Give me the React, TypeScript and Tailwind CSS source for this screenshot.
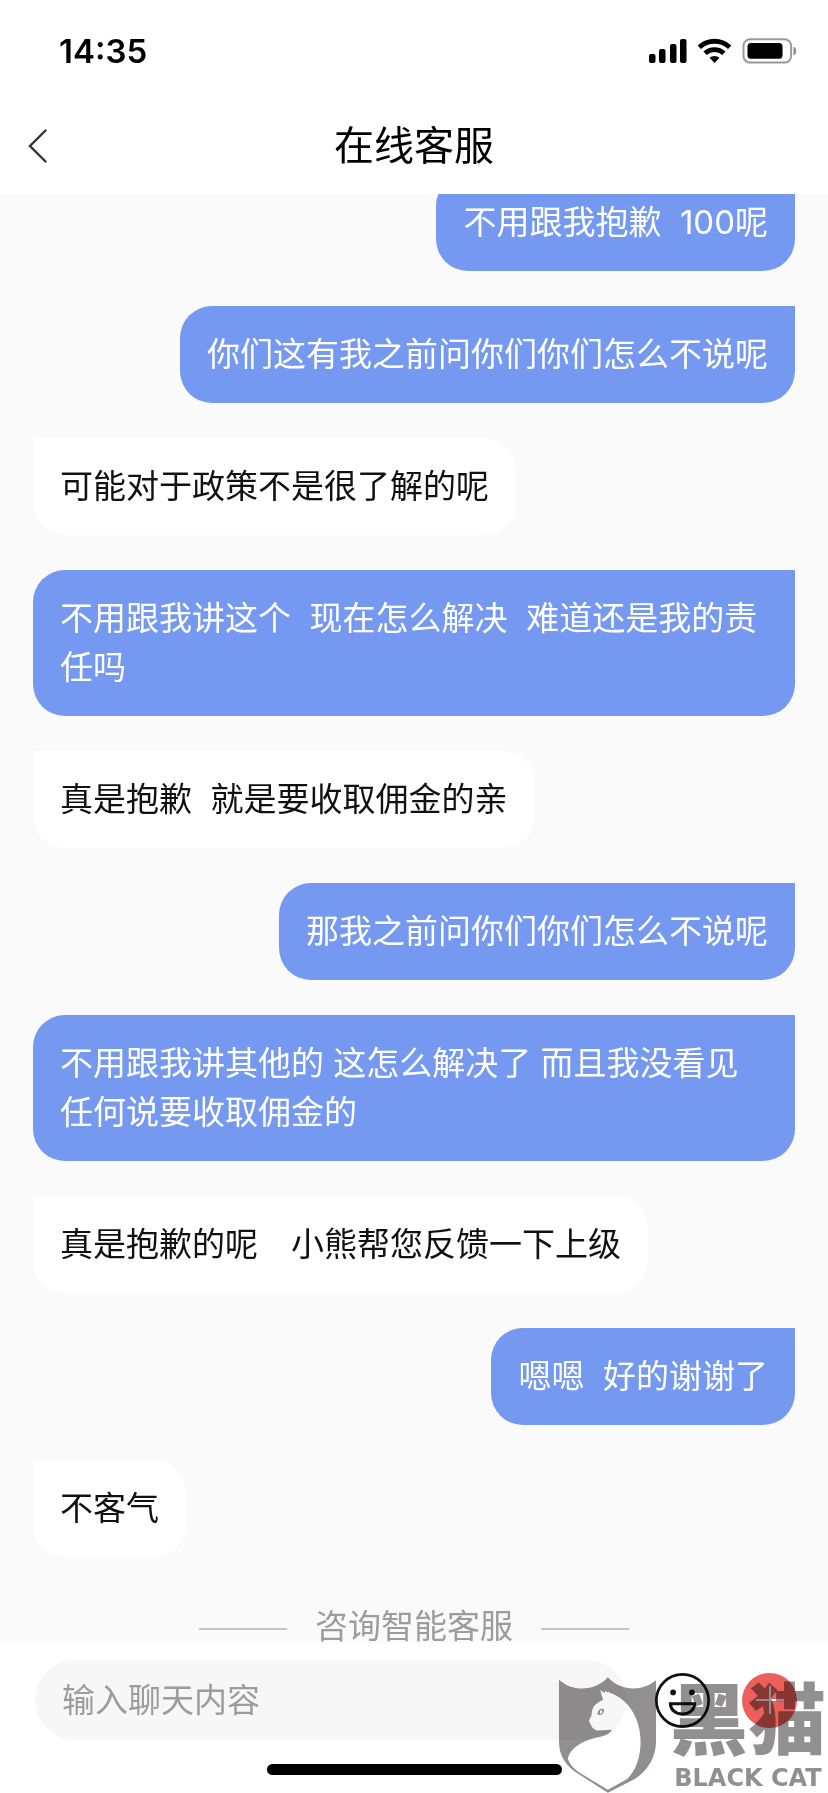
import { clsx } from "clsx";

type Message = {
  id: number;
  text: string;
  own?: boolean;
};

const messages: Message[] = [
  { id: 1, text: "不用跟我抱歉  100呢", own: true },
  { id: 2, text: "你们这有我之前问你们你们怎么不说呢", own: true },
  { id: 3, text: "可能对于政策不是很了解的呢" },
  {
    id: 4,
    text: "不用跟我讲这个  现在怎么解决  难道还是我的责任吗",
    own: true,
  },
  { id: 5, text: "真是抱歉  就是要收取佣金的亲" },
  { id: 6, text: "那我之前问你们你们怎么不说呢", own: true },
  {
    id: 7,
    text: "不用跟我讲其他的 这怎么解决了 而且我没看见任何说要收取佣金的",
    own: true,
  },
  { id: 8, text: "真是抱歉的呢\u3000小熊帮您反馈一下上级" },
  { id: 9, text: "嗯嗯  好的谢谢了", own: true },
  { id: 10, text: "不客气" },
];

const StatusIcons = () => (
  <svg width="148" height="26" viewBox="0 0 148 26" aria-hidden="true">
    <rect x="0" y="16" width="6.5" height="9" rx="2" />
    <rect x="10" y="11" width="6.5" height="14" rx="2" />
    <rect x="21" y="6" width="6.5" height="19" rx="2" />
    <rect x="31" y="1" width="6.5" height="24" rx="2" />
    <g fill="none" stroke="#000" strokeWidth="4.8">
      <path d="M50.300 9.200a22.400 22.400 0 0 1 30.400 0" />
      <path d="M56.100 15.300a13.600 13.600 0 0 1 18.800 0" />
    </g>
    <path d="M65.500 25l-5-5.200a7.500 7.500 0 0 1 10 0z" />
    <rect
      x="94.500"
      y="1.2"
      width="47.6"
      height="23.4"
      rx="6.5"
      fill="none"
      stroke="#999"
      strokeWidth="2"
    />
    <rect x="98.500" y="5" width="35" height="15.8" rx="3.5" />
    <path d="M144.500 8.4c3.6 1.4 3.6 7.6 0 9z" fill="#8a8a8a" />
  </svg>
);

const StatusBar = () => (
  <div className="flex h-[102px] items-center justify-between pl-[59px] pr-[31px]">
    <span className="text-[33px] font-semibold leading-[40px] text-black">
      14:35
    </span>
    <StatusIcons />
  </div>
);

const Header = () => (
  <header className="grid h-[92px] grid-cols-[1fr_auto_1fr] items-center px-7 pb-1">
    <button type="button" aria-label="返回" className="justify-self-start">
      <svg width="20" height="34" viewBox="0 0 20 34" fill="none">
        <path
          d="M17.5 1.5L2 17l15.500 15.500"
          stroke="#333"
          strokeWidth="2.400"
          strokeLinecap="round"
        />
      </svg>
    </button>
    <h1 className="text-[40px] font-normal leading-[48px] text-black">
      在线客服
    </h1>
  </header>
);

const Bubble = ({ text, own }: Message) => (
  <li
    className={clsx(
      "max-w-full shrink-0 whitespace-pre-wrap px-[27px] py-6 text-[33px] leading-[49px]",
      own
        ? "self-end rounded-[32px] rounded-tr-none bg-[#7599f1] text-white"
        : "self-start rounded-[32px] rounded-tl-none bg-white text-[#111]",
    )}>
    {text}
  </li>
);

const ServiceDivider = () => (
  <div className="mt-[52px] flex shrink-0 items-center justify-center gap-7">
    <span className="mt-1.5 h-[2px] w-[88px] bg-[#c4c4c4]" />
    <span className="text-[33px] leading-[34px] text-[#9c9c9c]">
      咨询智能客服
    </span>
    <span className="mt-1.5 h-[2px] w-[88px] bg-[#c4c4c4]" />
  </div>
);

const Composer = () => (
  <form
    className="flex items-center pl-[35px] pr-[31px]"
    onSubmit={(e) => e.preventDefault()}>
    <input
      type="text"
      aria-label="输入聊天内容"
      placeholder="输入聊天内容"
      className="h-20 min-w-0 flex-1 rounded-full bg-[#f7f7f7] px-[27px] text-[33px] text-[#111] outline-none placeholder:text-[#9c9c9c]"
    />
    <button type="button" aria-label="表情" className="ml-7">
      <svg width="55" height="55" viewBox="0 0 164 164" fill="none">
        <circle cx="82" cy="82" r="78" stroke="#111" strokeWidth="8" />
        <circle cx="54" cy="58" r="8.500" fill="#111" />
        <circle cx="110" cy="58" r="8.500" fill="#111" />
        <path
          d="M46 91.500h72c0 18-16 31-36 31s-36-13-36-31z"
          stroke="#111"
          strokeWidth="9"
        />
      </svg>
    </button>
    <button
      type="button"
      aria-label="更多"
      className="ml-8 flex size-[55px] items-center justify-center rounded-full bg-[#ed5f5b]">
      <svg width="28" height="28" viewBox="0 0 28 28">
        <path d="M14 0v28M0 14h28" stroke="#fff" strokeWidth="2" />
      </svg>
    </button>
  </form>
);

const Watermark = () => (
  <div className="pointer-events-none absolute bottom-0 right-0 flex items-start pr-[2px] mix-blend-multiply">
    <svg width="97" height="116" viewBox="58 113 290 347" fill="#918f8f">
      <path
        fillRule="evenodd"
        d="M58 121C98 158 166 157 204 114C244 158 310 156 348 123V306C348 350 326 392 286 417L204 459L116 403C78 380 58 348 58 306ZM181 152L190 182C168 190 156 205 156 222C155 234 146 240 148 247C153 253 155 269 172 273L216 271C208 288 184 291 162 296C122 307 90 328 84 357C90 374 104 390 122 401L204 450L262 418C290 390 302 350 302 305C302 240 268 178 207 159L206 155L203 159L196 154L194 161Z"
      />
      <path
        fillRule="evenodd"
        d="M173 225C173 213 181 207 191 208C194 217 190 225 181 227ZM184 211C179 216 179 220 182 224C188 221 188 215 184 211Z"
      />
    </svg>
    <div className="ml-[14px] flex w-[156px] flex-col text-[#918f8f]">
      <span className="text-[78px] font-black leading-[88px]">黑猫</span>
      <span className="whitespace-nowrap text-center font-['DejaVu_Sans',sans-serif] text-[24px] font-bold leading-[26px]">
        BLACK CAT
      </span>
    </div>
  </div>
);

export default function App() {
  return (
    <div className="relative flex h-screen flex-col overflow-hidden bg-white font-['Inter','Noto_Sans_CJK_SC',sans-serif]">
      <StatusBar />
      <Header />
      <main className="flex min-h-0 flex-1 flex-col justify-end overflow-hidden bg-[#fafafa] px-[33px]">
        <ul className="flex shrink-0 flex-col gap-[35px]">
          {messages.map((message) => (
            <Bubble key={message.id} {...message} />
          ))}
        </ul>
        <ServiceDivider />
      </main>
      <footer className="flex flex-col gap-6 bg-white pb-[18px] pt-[17px]">
        <Composer />
        <div className="h-[11px] w-[295px] self-center rounded-full bg-black" />
      </footer>
      <Watermark />
    </div>
  );
}
